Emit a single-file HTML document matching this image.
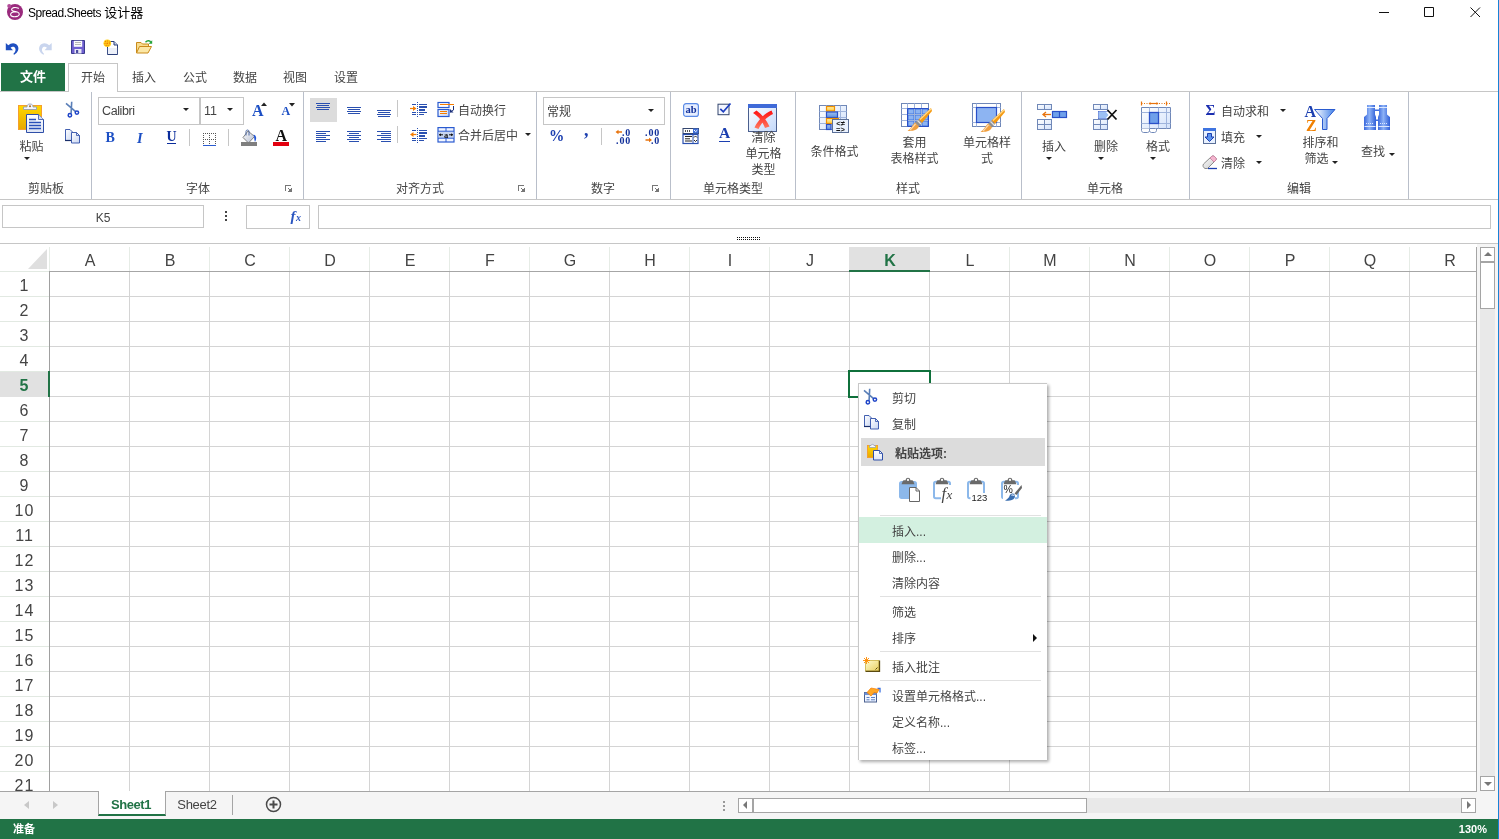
<!DOCTYPE html>
<html lang="zh-CN">
<head>
<meta charset="utf-8">
<title>Spread.Sheets 设计器</title>
<style>
*{box-sizing:border-box;margin:0;padding:0}
html,body{width:1499px;height:839px;overflow:hidden;background:#fff}
body{font-family:"Liberation Sans","Noto Sans CJK SC",sans-serif;font-size:12px;color:#444;position:relative}
.abs{position:absolute}
#app{position:absolute;left:0;top:0;width:1499px;height:839px;overflow:hidden;will-change:transform}
/* title */
#title{position:absolute;left:28px;top:5px;font-size:12px;color:#000;line-height:16px;white-space:nowrap}
/* tabs */
#file{position:absolute;left:1px;top:63px;width:64px;height:28px;background:#217346;color:#fff;font-weight:bold;font-size:13px;text-align:center;line-height:27px}
.tab{position:absolute;top:63px;height:29px;line-height:31px;font-size:12px;color:#444;text-align:center;width:50px}
.tab.on{border:1px solid #c6c6c6;border-bottom:none;line-height:29px;background:#fff;z-index:2}
#ribbon{position:absolute;left:0;top:91px;width:1499px;height:109px;border-top:1px solid #c6c6c6;border-bottom:1px solid #c6c6c6;background:#fff}
.gsep{position:absolute;top:92px;width:1px;height:107px;background:#b9bfca}
.glabel{position:absolute;top:181px;height:16px;line-height:16px;font-size:12px;color:#444;text-align:center;white-space:nowrap;transform:translateX(-50%)}
.t{position:absolute;white-space:nowrap;line-height:16px;font-size:12px;color:#444}
.tc{position:absolute;white-space:nowrap;line-height:15px;font-size:12px;color:#444;text-align:center;transform:translateX(-50%)}
.box{position:absolute;border:1px solid #c6c6c6;background:#fff}
.arr{position:absolute;width:0;height:0;border-left:3px solid transparent;border-right:3px solid transparent;border-top:3px solid #222}
.launch{position:absolute;width:8px;height:8px}
/* sheet */
#sheet{position:absolute;left:0;top:244px;width:1478px;height:547px;background:#fff;overflow:hidden}
#grid{position:absolute;left:49px;top:271px;width:1429px;height:520px;
 background-image:linear-gradient(to right,#d4d4d4 1px,transparent 1px),linear-gradient(to bottom,#d4d4d4 1px,transparent 1px);
 background-size:80px 25px,80px 25px;background-position:0 0,0 0}
.ch{position:absolute;top:250px;height:22px;line-height:22px;font-size:16px;color:#444;text-align:center;width:80px}
.rh{position:absolute;left:0;width:48px;height:25px;line-height:27px;font-size:16px;letter-spacing:1px;padding-left:1px;color:#444;text-align:center}
/* context menu */
#menu{position:absolute;left:858px;top:383px;width:189px;height:377px;background:#fff;border-left:1px solid #c8c8c8;border-top:1px solid #c8c8c8;box-shadow:2px 2px 3px rgba(0,0,0,.32);z-index:10}
.mi{position:absolute;left:33px;font-size:12px;line-height:16px;color:#444;white-space:nowrap}
.msep{position:absolute;left:21px;width:161px;height:1px;background:#e1e1e1}
/* status */
#status{position:absolute;left:0;top:819px;width:1499px;height:20px;background:#217346;color:#fff;font-size:11px;font-weight:bold;line-height:20px}
</style>
</head>
<body>
<div id="app">
<svg class="abs" style="left:6px;top:3px" width="18" height="18" viewBox="0 0 18 18"><circle cx="9" cy="9" r="8" fill="#9a2a7d"/><circle cx="3.2" cy="3" r="2" fill="#b24a98"/><path d="M12.5 5.2C9 3.8 5.6 4.6 5.6 6.6c0 1.6 2.6 2 4.4 2.1M10 8.7C6.5 8.6 4.4 10 4.6 11.8c.3 2 4 2.4 6.6 1.6 2.6-.9 2.9-3.4.2-4.4-1-.4-2.6-.4-3.8-.2" fill="none" stroke="#fff" stroke-width="1.1" stroke-linecap="round"/></svg>
<!--window controls-->
<svg class="abs" style="left:1370px;top:0" width="120" height="24" viewBox="0 0 120 24"><path d="M9 12.5h10M54.5 7.5h9v9h-9zM100.5 7.5l9.5 9.5M110 7.5l-9.5 9.5" fill="none" stroke="#111" stroke-width="1"/></svg>
<!--TITLE-->
<div id="title"><span style="letter-spacing:-0.5px">Spread.Sheets</span> <span style="font-size:13px">设计器</span></div>
<svg class="abs" style="left:5px;top:41px" width="15" height="14" viewBox="0 0 15 14"><path d="M.8 2v7.200h7.200L5.600 6.800C7 5.400 9.300 5.600 10.200 7.200c.9 1.700.2 3.900-1.900 5.700l.9.800c3.600-2 5.200-5.700 3.600-8.700C11 1.600 6.400 1.100 3.300 4.300z" fill="#1f4fc0"/></svg>
<svg class="abs" style="left:38px;top:41px" width="15" height="14" viewBox="0 0 15 14"><path transform="translate(14.500 0) scale(-1 1)" d="M.8 2v7.200h7.200L5.600 6.800C7 5.400 9.300 5.600 10.200 7.200c.9 1.700.2 3.900-1.900 5.700l.9.800c3.600-2 5.200-5.700 3.600-8.700C11 1.600 6.400 1.100 3.300 4.300z" fill="#c9d5ee"/></svg>
<svg class="abs" style="left:71px;top:40px" width="14" height="14" viewBox="0 0 14 14"><path d="M.5.5h13v13h-13z" fill="#6f5fd0" stroke="#3a3a8c"/><path d="M2.800 .8h8.400v6H2.800z" fill="#fafafa"/><path d="M4 2.500h6M4 4.500h6" stroke="#b0b0b0" stroke-width=".9"/><path d="M3.500 9h7v4.500h-7z" fill="#e8e8f4"/><path d="M5 10h2.200v3H5z" fill="#4a4aa0"/></svg>
<svg class="abs" style="left:103px;top:39px" width="16" height="16" viewBox="0 0 16 16"><path d="M4.500 2.500h6.500l3.500 3.500v9.500h-10z" fill="#fff" stroke="#2b3f7a"/><path d="M4.800 9v6h9.400V9z" fill="#dfe6f5" opacity=".6"/><path d="M11 2.500v3.500h3.500" fill="#c8d2ea" stroke="#2b3f7a"/><circle cx="4.300" cy="4.300" r="3.800" fill="#ffd21c"/><circle cx="4.300" cy="4.300" r="2.300" fill="none" stroke="#f07a00" stroke-width="1.200" stroke-dasharray="1 .9"/><circle cx="4.300" cy="4.300" r=".9" fill="#f07a00"/></svg>
<svg class="abs" style="left:135px;top:39px" width="18" height="16" viewBox="0 0 18 16"><path d="M1.500 14V3.500h4.500l1.500 1.500h6v3" fill="#f7dc8e" stroke="#c98a1a"/><path d="M1.500 14l3-6.500h12l-3.500 6.500z" fill="#fbe7a6" stroke="#c98a1a"/><path d="M10.500 3.200c1.800-2 4.400-1.800 5.400.3" fill="none" stroke="#25a33a" stroke-width="1.400"/><path d="M17.200 1.200v3.600h-3.600z" fill="#25a33a"/></svg>
<!--QAT-->
<!--TABS-->
<div id="file">文件</div>
<div class="tab on" style="left:68px">开始</div>
<div class="tab" style="left:119px">插入</div>
<div class="tab" style="left:170px">公式</div>
<div class="tab" style="left:220px">数据</div>
<div class="tab" style="left:270px">视图</div>
<div class="tab" style="left:321px">设置</div>
<div id="ribbon"></div>
<div class="gsep" style="left:91px"></div><div class="gsep" style="left:303px"></div><div class="gsep" style="left:536px"></div><div class="gsep" style="left:670px"></div><div class="gsep" style="left:795px"></div><div class="gsep" style="left:1021px"></div><div class="gsep" style="left:1189px"></div><div class="gsep" style="left:1408px"></div><div class="glabel" style="left:46px">剪贴板</div><div class="glabel" style="left:198px">字体</div><div class="glabel" style="left:420px">对齐方式</div><div class="glabel" style="left:603px">数字</div><div class="glabel" style="left:733px">单元格类型</div><div class="glabel" style="left:908px">样式</div><div class="glabel" style="left:1105px">单元格</div><div class="glabel" style="left:1299px">编辑</div>
<!--clipboard-->
<svg class="abs" style="left:17px;top:102px" width="28" height="32" viewBox="0 0 28 32">
<defs><linearGradient id="gy" x1="0" y1="0" x2="0" y2="1"><stop offset="0" stop-color="#ffd800"/><stop offset="1" stop-color="#e8a800"/></linearGradient>
<linearGradient id="gp" x1="0" y1="0" x2="0" y2="1"><stop offset="0" stop-color="#fff"/><stop offset="1" stop-color="#dfe6f6"/></linearGradient></defs>
<rect x="1.500" y="3.500" width="23" height="24" fill="url(#gy)" stroke="#f5a02c"/>
<path d="M6.500 7.500v-2.500h3.500c0-2 1-3 3-3s3 1 3 3h3.500v2.500z" fill="#f4f6fa" stroke="#8a97b4" stroke-width=".8"/><circle cx="13" cy="4.300" r="1" fill="#a06a2a"/>
<path d="M9.500 12.500h12l5 5v13h-17z" fill="url(#gp)" stroke="#2f4fa8"/><path d="M21.500 12.500v5h5" fill="#d5def2" stroke="#2f4fa8" stroke-width=".8"/>
<path d="M12 17.500h7M12 20.500h12M12 23.500h12M12 26.500h12" stroke="#2a50b8" stroke-width="1.300"/></svg>
<div class="tc" style="left:31.500px;top:140px">粘贴</div>
<div class="arr" style="left:24px;top:157px"></div>
<svg class="abs" id="ic-cut" style="left:65px;top:101px" width="15" height="18" viewBox="0 0 15 18"><path d="M1 2.300l9.300 8M6.700 .8l-.6 11.600" stroke="#5a7fb8" stroke-width="1.600" fill="none"/><circle cx="4.900" cy="14.300" r="1.700" fill="none" stroke="#1f45c8" stroke-width="1.500"/><circle cx="11.900" cy="11.600" r="1.700" fill="none" stroke="#1f45c8" stroke-width="1.500"/></svg>
<svg class="abs" id="ic-copy" style="left:64px;top:128px" width="17" height="16" viewBox="0 0 17 16"><defs><linearGradient id="gc" x1="0" y1="0" x2="1" y2="1"><stop offset="0" stop-color="#fff"/><stop offset="1" stop-color="#c9d6f2"/></linearGradient></defs><path d="M1.500 1.500h4.500l2.500 2.500v8.500h-7z" fill="url(#gc)" stroke="#2f4fa8" stroke-width=".9"/><path d="M1 12.500h7.500" stroke="#1a2f6a" stroke-width="1.200"/><path d="M7.500 4.500h5l3 3v7.500h-8z" fill="url(#gc)" stroke="#2f4fa8" stroke-width=".9"/><path d="M12.500 4.500v3h3" fill="none" stroke="#2f4fa8" stroke-width=".8"/></svg>
<!--font-->
<div class="box" style="left:98px;top:97px;width:102px;height:28px"></div>
<div class="box" style="left:200px;top:97px;width:44px;height:28px"></div>
<div class="t" style="left:102px;top:103px;font-size:12.500px;letter-spacing:-.4px">Calibri</div>
<div class="arr" style="left:182.500px;top:108px"></div>
<div class="t" style="left:204px;top:103px;font-size:12.500px">11</div>
<div class="arr" style="left:226.500px;top:108px"></div>
<div class="t" style="left:252px;top:102px;font:bold 16px/18px 'Liberation Serif',serif;color:#1c4fc4">A</div>
<svg class="abs" style="left:261px;top:102px" width="6" height="4"><path d="M0 4l3-3.500 3 3.500z" fill="#222"/></svg>
<div class="t" style="left:281.500px;top:103px;font:bold 12px/16px 'Liberation Serif',serif;color:#1c4fc4">A</div>
<svg class="abs" style="left:289px;top:103px" width="6" height="4"><path d="M0 0l3 3.500 3-3.500z" fill="#222"/></svg>
<div class="t" style="left:105.500px;top:130px;font:bold 14px/16px 'Liberation Serif',serif;color:#1c4fc4">B</div>
<div class="t" style="left:137px;top:130px;font:italic bold 14.500px/16px 'Liberation Serif',serif;color:#1c4fc4">I</div>
<div class="t" style="left:166.500px;top:129px;font:bold 14px/16px 'Liberation Serif',serif;color:#0b2d9b">U</div>
<div class="abs" style="left:167px;top:143px;width:9px;height:1px;background:#0b2d9b"></div>
<div class="abs" style="left:189px;top:129px;width:1px;height:17px;background:#c6c6c6"></div>
<svg class="abs" style="left:202px;top:132px" width="15" height="15" viewBox="0 0 15 15" shape-rendering="crispEdges"><g fill="#555"><rect x="1" y="1" width="1" height="1"/><rect x="1" y="3" width="1" height="1"/><rect x="1" y="5" width="1" height="1"/><rect x="1" y="7" width="1" height="1"/><rect x="1" y="9" width="1" height="1"/><rect x="1" y="11" width="1" height="1"/><rect x="3" y="1" width="1" height="1"/><rect x="3" y="7" width="1" height="1"/><rect x="5" y="1" width="1" height="1"/><rect x="5" y="7" width="1" height="1"/><rect x="7" y="1" width="1" height="1"/><rect x="7" y="3" width="1" height="1"/><rect x="7" y="5" width="1" height="1"/><rect x="7" y="7" width="1" height="1"/><rect x="7" y="9" width="1" height="1"/><rect x="7" y="11" width="1" height="1"/><rect x="9" y="1" width="1" height="1"/><rect x="9" y="7" width="1" height="1"/><rect x="11" y="1" width="1" height="1"/><rect x="11" y="7" width="1" height="1"/><rect x="13" y="1" width="1" height="1"/><rect x="13" y="3" width="1" height="1"/><rect x="13" y="5" width="1" height="1"/><rect x="13" y="7" width="1" height="1"/><rect x="13" y="9" width="1" height="1"/><rect x="13" y="11" width="1" height="1"/></g><rect x="1" y="13" width="13" height="1" fill="#2a5bd0"/></svg>
<div class="abs" style="left:228px;top:129px;width:1px;height:17px;background:#c6c6c6"></div>
<svg class="abs" style="left:240px;top:129px" width="19" height="18" viewBox="0 0 19 18"><defs><linearGradient id="gb" x1="0" y1="0" x2="1" y2="1"><stop offset="0" stop-color="#fff"/><stop offset="1" stop-color="#b4bccf"/></linearGradient></defs><path d="M8 2l6.500 5.500-6 6.500-5.500-5.500z" fill="url(#gb)" stroke="#666" stroke-width=".8"/><path d="M6 6.500V2.500c0-2 3-2 3 0v4" fill="none" stroke="#3a5a9a" stroke-width=".9"/><path d="M13.500 5.500c3 1 3.500 4 1.500 7.500-1-2-.5-5-1.500-7.500z" fill="#2457d6"/><rect x="1" y="13" width="16" height="4" fill="#7f7f7f"/></svg>
<div class="t" style="left:275.500px;top:127px;font:bold 16px/18px 'Liberation Serif',serif;color:#111">A</div>
<div class="abs" style="left:273px;top:142px;width:16px;height:4px;background:#e3000f"></div>
<svg class="abs" style="left:285px;top:185px" width="7" height="7" shape-rendering="crispEdges"><g fill="#777"><rect x="0" y="0" width="6" height="1"/><rect x="0" y="1" width="1" height="5"/><rect x="3" y="3" width="1" height="1"/><rect x="4" y="4" width="1" height="1"/><rect x="6" y="3" width="1" height="4"/><rect x="3" y="6" width="4" height="1"/><rect x="5" y="4" width="1" height="2"/><rect x="4" y="5" width="1" height="1"/></g></svg>
<!--align-->
<div class="abs" style="left:310px;top:98px;width:27px;height:24px;background:#dcdcdc"></div>
<svg class="abs" style="left:305px;top:95px" width="100" height="55" viewBox="305 95 100 55" shape-rendering="crispEdges"><g fill="#2a50b0"><rect x="316.0" y="103" width="14" height="1"/><rect x="317.0" y="105" width="12" height="1"/><rect x="316.0" y="107" width="14" height="1"/><rect x="317.0" y="109" width="12" height="1"/><rect x="347.0" y="107" width="14" height="1"/><rect x="348.0" y="109" width="12" height="1"/><rect x="347.0" y="111" width="14" height="1"/><rect x="348.0" y="113" width="12" height="1"/><rect x="377.0" y="110" width="14" height="1"/><rect x="378.0" y="112" width="12" height="1"/><rect x="377.0" y="114" width="14" height="1"/><rect x="378.0" y="116" width="12" height="1"/><rect x="316" y="131" width="14" height="1"/><rect x="316" y="133" width="10" height="1"/><rect x="316" y="135" width="14" height="1"/><rect x="316" y="137" width="10" height="1"/><rect x="316" y="139" width="14" height="1"/><rect x="316" y="141" width="10" height="1"/><rect x="347.0" y="131" width="14" height="1"/><rect x="349.0" y="133" width="10" height="1"/><rect x="347.0" y="135" width="14" height="1"/><rect x="349.0" y="137" width="10" height="1"/><rect x="347.0" y="139" width="14" height="1"/><rect x="349.0" y="141" width="10" height="1"/><rect x="377" y="131" width="14" height="1"/><rect x="381" y="133" width="10" height="1"/><rect x="377" y="135" width="14" height="1"/><rect x="381" y="137" width="10" height="1"/><rect x="377" y="139" width="14" height="1"/><rect x="381" y="141" width="10" height="1"/></g><rect x="397" y="100" width="1" height="17" fill="#c6c6c6"/><rect x="397" y="126" width="1" height="17" fill="#c6c6c6"/></svg>
<svg class="abs" style="left:410px;top:102px" width="17" height="16" viewBox="0 0 17 16" shape-rendering="crispEdges"><g fill="#2a50b0"><rect x="7" y="0" width="1" height="1"/><rect x="7" y="2" width="1" height="1"/><rect x="7" y="4" width="1" height="1"/><rect x="7" y="6" width="1" height="1"/><rect x="7" y="8" width="1" height="1"/><rect x="7" y="10" width="1" height="1"/><rect x="7" y="12" width="1" height="1"/><rect x="7" y="14" width="1" height="1"/><rect x="2" y="2" width="4" height="1"/><rect x="2" y="10" width="4" height="1"/><rect x="2" y="12" width="4" height="1"/><rect x="9" y="2" width="8" height="1"/><rect x="9" y="4" width="8" height="2"/><rect x="9" y="7" width="6" height="2"/><rect x="9" y="10" width="8" height="1"/><rect x="9" y="12" width="5" height="1"/></g><g shape-rendering="auto"><path d="M0 6.500h4" stroke="#f57c00" stroke-width="1.200"/><path d="M3 4l3.500 2.500L3 9z" fill="#f57c00"/></g></svg>
<svg class="abs" style="left:410px;top:128px" width="17" height="16" viewBox="0 0 17 16" shape-rendering="crispEdges"><g fill="#2a50b0"><rect x="7" y="0" width="1" height="1"/><rect x="7" y="2" width="1" height="1"/><rect x="7" y="4" width="1" height="1"/><rect x="7" y="6" width="1" height="1"/><rect x="7" y="8" width="1" height="1"/><rect x="7" y="10" width="1" height="1"/><rect x="7" y="12" width="1" height="1"/><rect x="7" y="14" width="1" height="1"/><rect x="2" y="2" width="4" height="1"/><rect x="2" y="10" width="4" height="1"/><rect x="2" y="12" width="4" height="1"/><rect x="9" y="2" width="8" height="1"/><rect x="9" y="4" width="8" height="2"/><rect x="9" y="7" width="6" height="2"/><rect x="9" y="10" width="8" height="1"/><rect x="9" y="12" width="5" height="1"/></g><g shape-rendering="auto"><path d="M2.500 6.500h4" stroke="#f57c00" stroke-width="1.200"/><path d="M3.500 4L0 6.500 3.500 9z" fill="#f57c00"/></g></svg>
<svg class="abs" style="left:437px;top:101px" width="18" height="17" viewBox="0 0 18 17"><defs><linearGradient id="gw" x1="0" y1="0" x2="1" y2="1"><stop offset="0" stop-color="#fff"/><stop offset="1" stop-color="#c5d3f0"/></linearGradient></defs><rect x="1" y="1.500" width="11" height="5" fill="#fff" stroke="#2a5bd0" stroke-width="1.200"/><rect x="1" y="8.500" width="11" height="7" fill="url(#gw)" stroke="#2a5bd0" stroke-width="1.200"/><path d="M3 3.500h14M3 10.500h7M3 12.500h7" stroke="#f57c00" stroke-width="1"/><path d="M16.500 5v4l-3 2" fill="none" stroke="#1a2f7a" stroke-width="1"/><path d="M13 8v3.500h3.500z" fill="#1a2f7a"/></svg>
<div class="t" style="left:458px;top:103px">自动换行</div>
<svg class="abs" style="left:437px;top:127px" width="18" height="16" viewBox="0 0 18 16"><rect x="1" y=".6" width="16" height="14.400" fill="#f2f6ff" stroke="#2a5bd0" stroke-width="1.200"/><rect x="1.600" y="4.500" width="14.800" height="6.500" fill="#c9d6f0"/><path d="M1 4.200h16M1 11.200h16M9 .6v3.600M9 11.200v3.800" stroke="#2a5bd0" stroke-width="1"/><text x="9" y="10.500" font-family="Liberation Serif,serif" font-weight="bold" font-size="8.500" text-anchor="middle" fill="#111">a</text><path d="M2 7.800h4M12 7.800h4" stroke="#111" stroke-width="1"/><path d="M2 7.800l2-1.500v3zM16 7.800l-2-1.500v3z" fill="#111"/></svg>
<div class="t" style="left:458px;top:128px">合并后居中</div>
<div class="arr" style="left:524.500px;top:133px"></div>
<svg class="abs" style="left:518px;top:185px" width="7" height="7" shape-rendering="crispEdges"><g fill="#777"><rect x="0" y="0" width="6" height="1"/><rect x="0" y="1" width="1" height="5"/><rect x="3" y="3" width="1" height="1"/><rect x="4" y="4" width="1" height="1"/><rect x="6" y="3" width="1" height="4"/><rect x="3" y="6" width="4" height="1"/><rect x="5" y="4" width="1" height="2"/><rect x="4" y="5" width="1" height="1"/></g></svg>
<!--number-->
<div class="box" style="left:543px;top:97px;width:122px;height:28px"></div>
<div class="t" style="left:547px;top:104px">常规</div>
<div class="arr" style="left:647.500px;top:109px"></div>
<div class="t" style="left:549px;top:126px;font:bold 17px/20px 'Liberation Serif',serif;color:#1c3fb0;transform:scaleX(.9);transform-origin:0 0">%</div>
<div class="t" style="left:584px;top:120px;font:bold 18px/20px 'Liberation Serif',serif;color:#1c3fb0">,</div>
<div class="abs" style="left:601px;top:128px;width:1px;height:17px;background:#c6c6c6"></div>
<svg class="abs" style="left:614px;top:128px" width="48" height="17" viewBox="0 0 48 17"><g font-family="Liberation Serif,serif" font-weight="bold" font-size="10" fill="#12309a" letter-spacing=".9" text-anchor="end"><text x="17.200" y="7.800">.0</text><text x="17.200" y="15.600">.00</text><text x="46.200" y="7.800">.00</text><text x="46.200" y="15.600">.0</text></g><g stroke="#e8730c" stroke-width="1.400" fill="#e8730c"><path d="M3 4h5M31.500 12h5" fill="none"/><path d="M4.500 1.800L1.500 4l3 2.200zM35 9.800l3 2.200-3 2.200z" stroke="none"/></g></svg>
<svg class="abs" style="left:652px;top:185px" width="7" height="7" shape-rendering="crispEdges"><g fill="#777"><rect x="0" y="0" width="6" height="1"/><rect x="0" y="1" width="1" height="5"/><rect x="3" y="3" width="1" height="1"/><rect x="4" y="4" width="1" height="1"/><rect x="6" y="3" width="1" height="4"/><rect x="3" y="6" width="4" height="1"/><rect x="5" y="4" width="1" height="2"/><rect x="4" y="5" width="1" height="1"/></g></svg>
<!--celltype-->
<svg class="abs" style="left:682px;top:102px" width="18" height="16" viewBox="0 0 18 16"><rect x="1.600" y="1.600" width="14.800" height="12.800" rx="2.500" fill="#e6eeff" stroke="#5b8be6" stroke-width="1.200"/><text x="9" y="11.300" font-family="Liberation Serif,serif" font-weight="bold" font-size="10.500" text-anchor="middle" fill="#12309a">ab</text></svg>
<svg class="abs" style="left:717px;top:102px" width="16" height="14" viewBox="0 0 16 14"><rect x="1" y="2.200" width="11" height="10.500" fill="#f4f7ff" stroke="#34466e" stroke-width="1"/><path d="M3.300 6.800l3 3L13.500 1.500" fill="none" stroke="#1d3fc0" stroke-width="1.700"/></svg>
<svg class="abs" style="left:682px;top:127px" width="18" height="18" viewBox="0 0 18 18"><rect x="1" y="1.500" width="15.500" height="5" fill="#fff" stroke="#34466e" stroke-width="1"/><rect x="11" y="1.500" width="5.500" height="5" fill="#3f6fd8"/><path d="M12 3l1.700 1.700L15.400 3" stroke="#fff" stroke-width="1" fill="none"/><path d="M3 4h1M5 4h1M7 4h1" stroke="#222" stroke-width="1.400"/><rect x="1" y="7.500" width="15" height="9" fill="#fff" stroke="#2a50b0" stroke-width="1.200"/><path d="M3 9.500h7M3 11.800h5M3 14h7" stroke="#222" stroke-width="1"/><path d="M11 7.500v9" stroke="#2a50b0" stroke-width="1"/><path d="M12 10.500l1.500-1.500 1.500 1.500M12 13l1.500 1.500 1.500-1.500" stroke="#222" stroke-width="1" fill="none"/></svg>
<div class="t" style="left:719px;top:124px;font:bold 15.500px/18px 'Liberation Serif',serif;color:#1c3fb0">A</div>
<div class="abs" style="left:719px;top:141px;width:11px;height:1px;background:#1c3fb0"></div>
<svg class="abs" style="left:747px;top:103px" width="31" height="30" viewBox="0 0 31 30"><defs><linearGradient id="gx" x1="0" y1="0" x2="1" y2="1"><stop offset="0" stop-color="#fff"/><stop offset="1" stop-color="#c3d8fa"/></linearGradient><linearGradient id="gr" x1="0" y1="0" x2="0" y2="1"><stop offset="0" stop-color="#ff1010"/><stop offset="1" stop-color="#ff7a60"/></linearGradient></defs><rect x="1.500" y="1.500" width="28" height="27" fill="url(#gx)" stroke="#4a5f8e" stroke-width="1"/><rect x="1" y="1" width="29" height="4" fill="#3f6ad8"/><path d="M6 10c5 3 9.500 8 12 15l4.500-1.500C19.500 17 15 11.500 9.500 7.500zM24.500 7.500c-7 3-13 9-17 17l4 1.500C15 19 19.500 14 26 11z" fill="url(#gr)"/></svg>
<div class="tc" style="left:763.500px;top:131px;line-height:15.800px">清除<br>单元格<br>类型</div>
<!--style-->
<svg class="abs" style="left:818px;top:104px" width="32" height="30" viewBox="0 0 32 30"><defs><linearGradient id="gg" x1="0" y1="0" x2="1" y2="1"><stop offset="0" stop-color="#fff"/><stop offset="1" stop-color="#cfe0fb"/></linearGradient><linearGradient id="gbl" x1="0" y1="0" x2="0" y2="1"><stop offset="0" stop-color="#9fc0f0"/><stop offset="1" stop-color="#5b8fe0"/></linearGradient><linearGradient id="gor" x1="0" y1="0" x2="0" y2="1"><stop offset="0" stop-color="#fff3b0"/><stop offset="1" stop-color="#ffc83a"/></linearGradient></defs><rect x="1.500" y="1.500" width="27" height="24" fill="url(#gg)" stroke="#7088b8"/><path d="M1.500 7.500h27M1.500 13.500h27M1.500 19.500h27M8.500 1.500v24M15.500 1.500v24M22.500 1.500v24" stroke="#9fb4dc" stroke-width="1"/><rect x="8.500" y="2.500" width="8" height="4.500" fill="url(#gor)" stroke="#f09000" stroke-width="1.200"/><rect x="8.500" y="8" width="11" height="5.500" fill="url(#gbl)" stroke="#2a50c8" stroke-width="1.200"/><rect x="8.500" y="14.500" width="12" height="5" fill="url(#gor)" stroke="#f09000" stroke-width="1.200"/><rect x="8.500" y="20.500" width="4.500" height="5" fill="url(#gbl)" stroke="#2a50c8" stroke-width="1.200"/><rect x="14.500" y="15.500" width="16" height="13" fill="#eaf2ff" stroke="#5a6f98"/><text x="22.500" y="22" font-family="Liberation Sans,sans-serif" font-weight="bold" font-size="7.500" text-anchor="middle" fill="#111">&lt;≠</text><text x="22.500" y="27.800" font-family="Liberation Sans,sans-serif" font-weight="bold" font-size="7.500" text-anchor="middle" fill="#111">=&gt;</text></svg>
<div class="tc" style="left:834.500px;top:145px">条件格式</div>
<svg class="abs" style="left:900px;top:102px" width="32" height="31" viewBox="0 0 32 31"><rect x="1.500" y="1.500" width="27" height="23" fill="#fff" stroke="#7088b8"/><rect x="7.500" y="6.500" width="21" height="18" fill="#3f74e0"/><path d="M1.500 6.500h27M1.500 12.500h27M1.500 18.500h27M7.500 1.500v23M14.500 1.500v23M21.500 1.500v23" stroke="#9fb4dc" stroke-width="1"/><g fill="#8db4f2"><rect x="8.500" y="7.500" width="5" height="4"/><rect x="15.500" y="7.500" width="5" height="4"/><rect x="22.500" y="7.500" width="5" height="4"/><rect x="8.500" y="13.500" width="5" height="4"/><rect x="15.500" y="13.500" width="5" height="4"/><rect x="22.500" y="13.500" width="5" height="4"/><rect x="8.500" y="19.500" width="5" height="4"/><rect x="15.500" y="19.500" width="5" height="4"/><rect x="22.500" y="19.500" width="5" height="4"/></g><path d="M7.500 6.500h21v18h-21z" fill="none" stroke="#2a50c8"/><g id="brush"><path d="M31 6l-12.500 11.500 3.500 3.500L32 9z" fill="#f59a12"/><path d="M31 7l-11 10.500" stroke="#ffd98a" stroke-width="1.300"/><path d="M18.500 17.500l-3.500 3 4 4 3-3.500z" fill="#8f8f8f"/><path d="M17.500 18.500l3.500 3.500" stroke="#e0e0e0" stroke-width="1.200"/><path d="M15 20.500l4 4c-2 4-6.500 4.500-11.500 4.500 3-2 4.500-5.500 7.500-8.500z" fill="#f0a040"/><path d="M15.500 22c-2 2-3 4-5.500 6" stroke="#fbd9ae" stroke-width="1.200" fill="none"/></g></svg>
<div class="tc" style="left:914.500px;top:135px;line-height:16px">套用<br>表格样式</div>
<svg class="abs" style="left:971px;top:102px" width="34" height="32" viewBox="0 0 34 32"><rect x="1.500" y="1.500" width="28" height="23" fill="#fff" stroke="#7088b8"/><path d="M1.500 5.500h28M1.500 20.500h28M5.500 1.500v23M25.500 1.500v23" stroke="#9fb4dc" stroke-width="1"/><rect x="5.500" y="5.500" width="20" height="15" fill="#8db4f2" stroke="#2a50c8" stroke-width="1.200"/><use href="#brush" x="2" y="1"/></svg>
<div class="tc" style="left:987px;top:135px;line-height:16px">单元格样<br>式</div>
<!--cells-->
<svg class="abs" style="left:1036px;top:103px" width="32" height="28" viewBox="0 0 32 28"><defs><linearGradient id="gcl" x1="0" y1="0" x2="1" y2="1"><stop offset="0" stop-color="#fff"/><stop offset="1" stop-color="#d3e2fb"/></linearGradient></defs><rect x="1.500" y="1.500" width="14" height="5" fill="url(#gcl)" stroke="#7088b8"/><path d="M8.500 1.500v5" stroke="#7088b8"/><rect x="1.500" y="16.500" width="14" height="10" fill="url(#gcl)" stroke="#7088b8"/><path d="M8.500 16.500v10M1.500 21.500h14" stroke="#7088b8"/><rect x="16.500" y="8.500" width="14" height="6" fill="#6fa0ea" stroke="#2a50c8" stroke-width="1.200"/><path d="M23.500 8.500v6" stroke="#2a50c8" stroke-width="1.200"/><path d="M8 11.500h7" stroke="#e8730c" stroke-width="1.300"/><path d="M10 9l-3 2.500 3 2.500" fill="none" stroke="#e8730c" stroke-width="1.300"/></svg>
<div class="tc" style="left:1054px;top:140px">插入</div>
<div class="arr" style="left:1045.500px;top:157px"></div>
<svg class="abs" style="left:1092px;top:103px" width="28" height="28" viewBox="0 0 28 28"><rect x="1.500" y="1.500" width="14" height="5" fill="url(#gcl)" stroke="#7088b8"/><path d="M8.500 1.500v5" stroke="#7088b8"/><rect x="1.500" y="16.500" width="14" height="10" fill="url(#gcl)" stroke="#7088b8"/><path d="M8.500 16.500v10M1.500 21.500h14" stroke="#7088b8"/><path d="M6.500 8.500h7l3 3.500-3 3.500h-7z" fill="#9cc0f4"/><path d="M6.500 8.500h9M6.500 15.500h9M6.500 8.500v7" fill="none" stroke="#2a50c8" stroke-width="1" stroke-dasharray="1 1"/><path d="M15.500 7l9 9.500M24.500 7l-9 9.500" stroke="#111" stroke-width="1.800"/></svg>
<div class="tc" style="left:1106px;top:140px">删除</div>
<div class="arr" style="left:1097.500px;top:157px"></div>
<svg class="abs" style="left:1140px;top:101px" width="32" height="32" viewBox="0 0 32 32"><path d="M1.500 2.500h29" stroke="#e8730c" stroke-width="1" stroke-dasharray="1 1.500"/><path d="M1.500 .5v4M26.500 .5v4" stroke="#e8730c" stroke-width="1.200"/><path d="M9 2.500h9" stroke="#e8730c" stroke-width="1.200"/><path d="M10.500 1l-2 1.500 2 1.500zM16.500 1l2 1.500-2 1.500z" fill="#e8730c"/><path d="M1.500 6.500h29v21h-29z" fill="url(#gcl)" stroke="#7088b8"/><path d="M1.500 27.500v2c0 1 1 2 2 2h4c1 0 2-1 2-2v-2M9.500 29.500c0 1 1 2 2 2h3c1 0 2-1 2-2v-2" fill="#fff" stroke="#7088b8"/><path d="M1.500 11.500h29M1.500 22.500h29M9.500 6.500v21M18.500 6.500v21M26.500 6.500v21" stroke="#9fb4dc"/><rect x="9.500" y="11.500" width="9" height="11" fill="#6fa0ea" stroke="#2a50c8" stroke-width="1.300"/></svg>
<div class="tc" style="left:1158px;top:140px">格式</div>
<div class="arr" style="left:1149.500px;top:157px"></div>
<!--editing-->
<div class="t" style="left:1205.500px;top:100px;font:bold 15px/20px 'Liberation Serif',serif;color:#1c2fb0">Σ</div>
<div class="t" style="left:1221px;top:104px">自动求和</div>
<div class="arr" style="left:1279.500px;top:109px"></div>
<svg class="abs" style="left:1202px;top:127px" width="15" height="18" viewBox="0 0 15 18"><rect x="1.500" y="1.500" width="12" height="15" fill="#e8f1ff" stroke="#5a6f98"/><rect x="1" y="1" width="13" height="3" fill="#3f74e0"/><path d="M5.500 6.500h4v3.500h2.500L7.500 14.500 3 10h2.500z" fill="#5b93ee" stroke="#1c3fb0" stroke-width="1"/></svg>
<div class="t" style="left:1221px;top:130px">填充</div>
<div class="arr" style="left:1255.500px;top:135px"></div>
<svg class="abs" style="left:1202px;top:155px" width="17" height="15" viewBox="0 0 17 15"><defs><linearGradient id="ger" x1="0" y1="0" x2="1" y2="1"><stop offset="0" stop-color="#fff"/><stop offset="1" stop-color="#c8c8c8"/></linearGradient></defs><path d="M1.500 9l8-7.500c1-.8 2-.8 3 0l1 1c1 1 1 2 0 3l-8 8h-2.500c-2-1-2.500-3-1.500-4.500z" fill="url(#ger)" stroke="#8a8a8a" stroke-width="1"/><path d="M8 3l1.500-1.500c1-.8 2-.8 3 0l1 1c1 1 1 2 0 3L12 7z" fill="#f5b5cf" stroke="#c87a9a" stroke-width=".8"/><path d="M6 13.500h9" stroke="#1c3fb0" stroke-width="1.300"/></svg>
<div class="t" style="left:1221px;top:156px">清除</div>
<div class="arr" style="left:1255.500px;top:161px"></div>
<svg class="abs" style="left:1304px;top:104px" width="33" height="28" viewBox="0 0 33 28"><defs><linearGradient id="gfu" x1="0" y1="0" x2="1" y2="0"><stop offset="0" stop-color="#fff"/><stop offset="1" stop-color="#3f7fe8"/></linearGradient></defs><path d="M10.500 5.500h20.500l-8 9v11h-4.500v-11z" fill="url(#gfu)" stroke="#2a5bd0" stroke-width="1"/><text x=".5" y="12.500" font-family="Liberation Serif,serif" font-weight="bold" font-size="16" fill="#1c3fb0">A</text><text x="2" y="26.500" font-family="Liberation Serif,serif" font-weight="bold" font-size="16" fill="#f08000">Z</text></svg>
<div class="tc" style="left:1320.500px;top:135px;line-height:16px">排序和</div>
<div class="t" style="left:1304.500px;top:151px">筛选</div>
<div class="arr" style="left:1331.500px;top:161px"></div>
<svg class="abs" style="left:1363px;top:104px" width="28" height="27" viewBox="0 0 28 27"><defs><linearGradient id="gbi" x1="0" y1="0" x2="1" y2="0"><stop offset="0" stop-color="#3a68dc"/><stop offset=".45" stop-color="#8db2f6"/><stop offset="1" stop-color="#2f5fd8"/></linearGradient></defs><path d="M4 1h8v9.500l1 2.500v13H1V13l3-2.500z" fill="url(#gbi)"/><path d="M16 1h8v9.500l3 2.500v13H15V13l1-2.500z" fill="url(#gbi)"/><rect x="12" y="5.500" width="4" height="1.500" fill="#3f6fe0"/><rect x="13" y="15.500" width="2" height="1.500" fill="#3f6fe0"/><path d="M4 3.500h8M16 3.500h8M1.500 22.500h11M15.500 22.500h11" stroke="#dbe7ff" stroke-width="1"/><path d="M3 19.500h8M17 19.500h8" stroke="#dbe7ff" stroke-width="1" stroke-dasharray="1 1"/></svg>
<div class="t" style="left:1361px;top:144px">查找</div>
<div class="arr" style="left:1388.500px;top:153px"></div>
<!--RIBBON-->
<div class="box" style="left:2px;top:205px;width:202px;height:23px"><div class="abs" style="left:0;top:0;width:200px;height:21px;line-height:24px;text-align:center;font-size:12px;color:#444">K5</div></div>
<div class="abs" style="left:225px;top:211px;width:2px;height:2px;background:#444;box-shadow:0 4px 0 #444,0 8px 0 #444"></div>
<div class="box" style="left:246px;top:205px;width:64px;height:24px"></div>
<div class="box" style="left:318px;top:205px;width:1173px;height:24px"></div>
<div class="abs" style="left:0;top:243px;width:1498px;height:1px;background:#c6c6c6"></div>
<svg class="abs" style="left:289px;top:208px" width="16" height="17" viewBox="0 0 16 17"><text x="1.500" y="13" font-family="Liberation Serif,serif" font-style="italic" font-weight="bold" font-size="15" fill="#2a55c0">f</text><text x="7" y="13.200" font-family="Liberation Serif,serif" font-style="italic" font-weight="bold" font-size="10" fill="#2a55c0">x</text></svg>
<svg class="abs" style="left:737px;top:237px" width="24" height="3" shape-rendering="crispEdges"><g fill="#111"><rect x="0" y="0" width="1" height="1"/><rect x="0" y="2" width="1" height="1"/><rect x="2" y="0" width="1" height="1"/><rect x="2" y="2" width="1" height="1"/><rect x="4" y="0" width="1" height="1"/><rect x="4" y="2" width="1" height="1"/><rect x="6" y="0" width="1" height="1"/><rect x="6" y="2" width="1" height="1"/><rect x="8" y="0" width="1" height="1"/><rect x="8" y="2" width="1" height="1"/><rect x="10" y="0" width="1" height="1"/><rect x="10" y="2" width="1" height="1"/><rect x="12" y="0" width="1" height="1"/><rect x="12" y="2" width="1" height="1"/><rect x="14" y="0" width="1" height="1"/><rect x="14" y="2" width="1" height="1"/><rect x="16" y="0" width="1" height="1"/><rect x="16" y="2" width="1" height="1"/><rect x="18" y="0" width="1" height="1"/><rect x="18" y="2" width="1" height="1"/><rect x="20" y="0" width="1" height="1"/><rect x="20" y="2" width="1" height="1"/><rect x="22" y="0" width="1" height="1"/><rect x="22" y="2" width="1" height="1"/></g></svg>
<!--FORMULA-->
<div class="abs" style="left:49px;top:247px;width:1428px;height:24px;background-image:linear-gradient(to right,#e6ece6 1px,transparent 1px);background-size:80px 24px"></div><div class="abs" style="left:0;top:271px;width:49px;height:520px;background-image:linear-gradient(to bottom,#e2e9e2 1px,transparent 1px);background-size:49px 25px"></div>
<div id="grid"></div>
<div class="abs" style="left:849px;top:247px;width:81px;height:23px;background:#e1e1e1"></div><div class="abs" style="left:0;top:372px;width:48px;height:25px;background:#e1e1e1"></div><div class="ch" style="left:50px">A</div><div class="ch" style="left:130px">B</div><div class="ch" style="left:210px">C</div><div class="ch" style="left:290px">D</div><div class="ch" style="left:370px">E</div><div class="ch" style="left:450px">F</div><div class="ch" style="left:530px">G</div><div class="ch" style="left:610px">H</div><div class="ch" style="left:690px">I</div><div class="ch" style="left:770px">J</div><div class="ch" style="left:850px;color:#217346;font-weight:bold">K</div><div class="ch" style="left:930px">L</div><div class="ch" style="left:1010px">M</div><div class="ch" style="left:1090px">N</div><div class="ch" style="left:1170px">O</div><div class="ch" style="left:1250px">P</div><div class="ch" style="left:1330px">Q</div><div class="ch" style="left:1410px">R</div>
<div class="rh" style="top:272px">1</div><div class="rh" style="top:297px">2</div><div class="rh" style="top:322px">3</div><div class="rh" style="top:347px">4</div><div class="rh" style="top:372px;color:#217346;font-weight:bold">5</div><div class="rh" style="top:397px">6</div><div class="rh" style="top:422px">7</div><div class="rh" style="top:447px">8</div><div class="rh" style="top:472px">9</div><div class="rh" style="top:497px">10</div><div class="rh" style="top:522px">11</div><div class="rh" style="top:547px">12</div><div class="rh" style="top:572px">13</div><div class="rh" style="top:597px">14</div><div class="rh" style="top:622px">15</div><div class="rh" style="top:647px">16</div><div class="rh" style="top:672px">17</div><div class="rh" style="top:697px">18</div><div class="rh" style="top:722px">19</div><div class="rh" style="top:747px">20</div><div class="rh" style="top:772px">21</div>
<div class="abs" style="left:49px;top:271px;width:1428px;height:1px;background:#a6a6a6"></div>
<div class="abs" style="left:49px;top:271px;width:1px;height:520px;background:#a0a0a0"></div>
<div class="abs" style="left:849px;top:270px;width:81px;height:2px;background:#217346"></div>
<div class="abs" style="left:48px;top:371px;width:2px;height:26px;background:#217346"></div>
<svg class="abs" style="left:28px;top:248px" width="20" height="22"><polygon points="19,1 19,21 0,21" fill="#dfdfdf"/></svg>
<div class="abs" style="left:848px;top:370px;width:83px;height:28px;border:2px solid #0f703b"></div>
<div class="abs" style="left:1477px;top:244px;width:21px;height:575px;background:#f5f5f5"></div>
<div class="abs" style="left:1476px;top:247px;width:1px;height:545px;background:#a5a5a5"></div>
<div class="abs" style="left:0;top:791px;width:1477px;height:1px;background:#a5a5a5"></div>
<div class="abs" style="left:0;top:792px;width:1498px;height:27px;background:#f5f5f5"></div>
<!--vscroll-->
<div class="abs" style="left:1480px;top:247px;width:15px;height:544px;background:#e9e9e9"></div>
<div class="abs" style="left:1480px;top:247px;width:15px;height:15px;background:#fff;border:1px solid #a5a5a5"></div>
<div class="abs" style="left:1480px;top:262px;width:15px;height:47px;background:#fff;border:1px solid #a5a5a5"></div>
<div class="abs" style="left:1480px;top:776px;width:15px;height:15px;background:#fff;border:1px solid #a5a5a5"></div>
<div class="abs" style="left:1484px;top:252px;width:0;height:0;border-left:4px solid transparent;border-right:4px solid transparent;border-bottom:4px solid #777"></div>
<div class="abs" style="left:1484px;top:782px;width:0;height:0;border-left:4px solid transparent;border-right:4px solid transparent;border-top:4px solid #777"></div>
<!--hscroll-->
<div class="abs" style="left:738px;top:798px;width:738px;height:15px;background:#e9e9e9"></div>
<div class="abs" style="left:738px;top:798px;width:15px;height:15px;background:#fff;border:1px solid #a5a5a5"></div>
<div class="abs" style="left:753px;top:798px;width:334px;height:15px;background:#fff;border:1px solid #a5a5a5"></div>
<div class="abs" style="left:1461px;top:798px;width:15px;height:15px;background:#fff;border:1px solid #a5a5a5"></div>
<div class="abs" style="left:743px;top:801px;width:0;height:0;border-top:4px solid transparent;border-bottom:4px solid transparent;border-right:4px solid #777"></div>
<div class="abs" style="left:1467px;top:801px;width:0;height:0;border-top:4px solid transparent;border-bottom:4px solid transparent;border-left:4px solid #777"></div>
<div class="abs" style="left:723px;top:801px;width:2px;height:2px;background:#999;box-shadow:0 4px 0 #999,0 8px 0 #999"></div>
<!--sheet tabs-->
<div class="abs" style="left:98px;top:791px;width:68px;height:25px;background:#fff;border-left:1px solid #a5a5a5;border-right:1px solid #a5a5a5;border-bottom:2px solid #217346;text-align:center;font-size:13px;letter-spacing:-.45px;font-weight:bold;color:#217346;line-height:28px;text-indent:-2px">Sheet1</div>
<div class="abs" style="left:166px;top:792px;width:64px;height:24px;text-align:center;font-size:13px;letter-spacing:-.3px;color:#444;line-height:25px;text-indent:-2px">Sheet2</div>
<div class="abs" style="left:232px;top:795px;width:1px;height:20px;background:#a5a5a5"></div>
<svg class="abs" style="left:265px;top:796px" width="18" height="18"><circle cx="8.5" cy="8.5" r="7" fill="none" stroke="#4a4a4a" stroke-width="1.5"/><path d="M4.500 8.500h8M8.500 4.500v8" stroke="#4a4a4a" stroke-width="2"/></svg>
<div class="abs" style="left:24px;top:801px;width:0;height:0;border-top:4px solid transparent;border-bottom:4px solid transparent;border-right:5px solid #c8c8c8"></div>
<div class="abs" style="left:53px;top:801px;width:0;height:0;border-top:4px solid transparent;border-bottom:4px solid transparent;border-left:5px solid #c8c8c8"></div>
<div class="abs" style="left:1498px;top:0;width:1px;height:839px;background:#1883d7;z-index:20"></div>
<!--SHEET-->
<div id="menu">
<div class="abs" style="left:2px;top:54px;width:184px;height:28px;background:#dcdcdc"></div>
<div class="abs" style="left:0;top:133px;width:188px;height:26px;background:#d3f0e0"></div>
<div class="mi" style="top:7px">剪切</div><div class="mi" style="top:33px">复制</div><div class="mi" style="top:140px">插入...</div><div class="mi" style="top:166px">删除...</div><div class="mi" style="top:192px">清除内容</div><div class="mi" style="top:221px">筛选</div><div class="mi" style="top:247px">排序</div><div class="mi" style="top:276px">插入批注</div><div class="mi" style="top:305px">设置单元格格式...</div><div class="mi" style="top:331px">定义名称...</div><div class="mi" style="top:357px">标签...</div>
<div class="mi" style="left:36px;top:62px;font-weight:bold;font-size:12px">粘贴选项:</div>
<div class="msep" style="top:131px"></div><div class="msep" style="top:212px"></div><div class="msep" style="top:267px"></div><div class="msep" style="top:296px"></div>
<svg class="abs" style="left:174px;top:250px" width="4" height="8"><path d="M0 0l4 4-4 4z" fill="#111"/></svg>
<svg class="abs" style="left:4px;top:4px" width="15" height="18" viewBox="0 0 15 18"><path d="M1 2.300l9.300 8M6.700 .8l-.6 11.600" stroke="#5a7fb8" stroke-width="1.600" fill="none"/><circle cx="4.900" cy="14.300" r="1.700" fill="none" stroke="#1f45c8" stroke-width="1.500"/><circle cx="11.900" cy="11.600" r="1.700" fill="none" stroke="#1f45c8" stroke-width="1.500"/></svg>
<svg class="abs" style="left:4px;top:30px" width="17" height="16" viewBox="0 0 17 16"><path d="M1.500 1.500h4.500l2.500 2.500v8.500h-7z" fill="url(#gc)" stroke="#2f4fa8" stroke-width=".9"/><path d="M1 12.500h7.500" stroke="#1a2f6a" stroke-width="1.200"/><path d="M7.500 4.500h5l3 3v7.500h-8z" fill="url(#gc)" stroke="#2f4fa8" stroke-width=".9"/><path d="M12.500 4.500v3h3" fill="none" stroke="#2f4fa8" stroke-width=".8"/></svg>
<svg class="abs" style="left:7px;top:59px" width="18" height="18" viewBox="0 0 18 18"><rect x="1.500" y="2.500" width="10" height="12" fill="url(#gy)" stroke="#f5a02c"/><path d="M3.500 4.500v-2h1.500c0-1.500 3-1.500 3 0h1.500v2z" fill="#f4f6fa" stroke="#8a97b4" stroke-width=".7"/><path d="M7.500 7.500h6l3 3v6.500h-9z" fill="url(#gp)" stroke="#2f4fa8"/><path d="M13.500 7.500v3h3" fill="none" stroke="#2f4fa8" stroke-width=".8"/></svg>
<svg class="abs" style="left:39px;top:93px" width="24" height="26" viewBox="0 0 24 26"><path d="M1 6.500c0-1.500 1-2.500 2.500-2.500h13c1.500 0 2.500 1 2.500 2.500v13c0 1.500-1 2.500-2.500 2.500h-13c-1.500 0-2.500-1-2.500-2.500z" fill="#8cb8ea"/><path d="M3.500 7.200l1.300-3.200c.2-.5.600-.8 1.200-.8h1.600c.2-3.300 4.600-3.300 4.800 0h1.600c.6 0 1 .3 1.200.8l1.300 3.200z" fill="#6a6a6a"/><circle cx="10" cy="2.900" r="1.100" fill="#fff"/><path d="M11.500 10.500h6.500l3.500 3.500v10.500h-10z" fill="#fff" stroke="#666" stroke-width="1"/><path d="M18 10.500v3.500h3.500" fill="none" stroke="#666" stroke-width="1"/></svg>
<svg class="abs" style="left:73px;top:93px" width="24" height="26" viewBox="0 0 24 26"><path d="M2 6.500c0-1 .8-1.800 1.800-1.800h12.400c1 0 1.800.8 1.800 1.800v13c0 1-.8 1.800-1.800 1.800H3.800c-1 0-1.800-.8-1.800-1.800z" fill="none" stroke="#8cb8ea" stroke-width="2"/><path d="M3.500 7.200l1.300-3.200c.2-.5.600-.8 1.200-.8h1.600c.2-3.300 4.600-3.300 4.800 0h1.600c.6 0 1 .3 1.200.8l1.300 3.200z" fill="#6a6a6a"/><circle cx="10" cy="2.900" r="1.100" fill="#fff"/><rect x="9" y="8" width="14" height="18" fill="#fff"/><text x="9.500" y="21.500" font-family="Liberation Serif,serif" font-style="italic" font-size="16.500" fill="#444">f</text><text x="14.500" y="22" font-family="Liberation Serif,serif" font-style="italic" font-size="13" fill="#444">x</text></svg>
<svg class="abs" style="left:107px;top:93px" width="24" height="26" viewBox="0 0 24 26"><path d="M2 6.500c0-1 .8-1.800 1.800-1.800h12.400c1 0 1.800.8 1.800 1.800v13c0 1-.8 1.800-1.800 1.800H3.800c-1 0-1.800-.8-1.800-1.800z" fill="none" stroke="#8cb8ea" stroke-width="2"/><path d="M3.500 7.200l1.300-3.200c.2-.5.600-.8 1.200-.8h1.600c.2-3.300 4.600-3.300 4.800 0h1.600c.6 0 1 .3 1.200.8l1.300 3.200z" fill="#6a6a6a"/><circle cx="10" cy="2.900" r="1.100" fill="#fff"/><rect x="4.500" y="16" width="19" height="10" fill="#fff"/><text x="5.500" y="23.800" font-family="Liberation Sans,sans-serif" font-size="9.500" fill="#222">123</text></svg>
<svg class="abs" style="left:141px;top:93px" width="24" height="26" viewBox="0 0 24 26"><path d="M2 6.500c0-1 .8-1.800 1.800-1.800h12.400c1 0 1.800.8 1.800 1.800v13c0 1-.8 1.800-1.800 1.800H3.800c-1 0-1.800-.8-1.800-1.800z" fill="none" stroke="#8cb8ea" stroke-width="2"/><path d="M3.500 7.200l1.300-3.200c.2-.5.600-.8 1.200-.8h1.600c.2-3.300 4.600-3.300 4.800 0h1.600c.6 0 1 .3 1.200.8l1.300 3.200z" fill="#6a6a6a"/><circle cx="10" cy="2.900" r="1.100" fill="#fff"/><rect x="12" y="8" width="12" height="6" fill="#fff"/><rect x="3" y="18" width="12" height="8" fill="#fff"/><text x="3.500" y="16" font-family="Liberation Sans,sans-serif" font-size="10.500" fill="#222">%</text><path d="M21.500 8l-7 8.500 2 1.500 5.500-7z" fill="#666"/><path d="M14 17c-2-1-4 0-4.500 2-.5 1.500-2 3-4.500 4.500 4 .8 8 0 9.500-2.500.8-1.500.5-3-.5-4z" fill="#3a6eb0"/><path d="M11.500 18.500c1-1 2.500-.5 2.500.5" stroke="#cfe0f5" stroke-width="1.200" fill="none"/></svg>
<svg class="abs" style="left:4px;top:273px" width="18" height="16" viewBox="0 0 18 16"><defs><linearGradient id="gn" x1="0" y1="0" x2="1" y2="1"><stop offset="0" stop-color="#fffbd0"/><stop offset="1" stop-color="#e8d060"/></linearGradient></defs><path d="M2.500 3.500h13.500v10.500h-13.500z" fill="url(#gn)" stroke="#c9b040" stroke-width=".8"/><path d="M2.500 14.300h14V3.500" fill="none" stroke="#5a4a10" stroke-width="1.300"/><path d="M12.500 12.500l2-2" stroke="#5a4a10" stroke-width="1"/><path d="M3.500 0v7M0 3.500h7M1 1l5 5M6 1L1 6" stroke="#ff8a00" stroke-width=".9"/></svg>
<svg class="abs" style="left:4px;top:303px" width="18" height="16" viewBox="0 0 18 16"><rect x="1.500" y="5.500" width="12" height="9.500" fill="#f0f5ff" stroke="#4a6090" stroke-width="1"/><rect x="1.500" y="5.500" width="12" height="2.500" fill="#6a90d8"/><path d="M3.500 10.500h3M8 10.500h4M3.500 12.800h3M8 12.800h4" stroke="#5a80c8" stroke-width="1"/><path d="M14.500 1.500h2.500v4" fill="none" stroke="#3a70e0" stroke-width="1.300"/><path d="M4 5.500l4-4.500 8 1.500-2 3.500-3-.5-3 3.500z" fill="#ffa726" stroke="#f57c00" stroke-width=".7"/></svg>
</div>
<!--MENU-->
<!--STATUS-->
<div id="status"><span class="abs" style="left:13px">准备</span><span class="abs" style="right:12px">130%</span></div>
</div>
</body>
</html>
